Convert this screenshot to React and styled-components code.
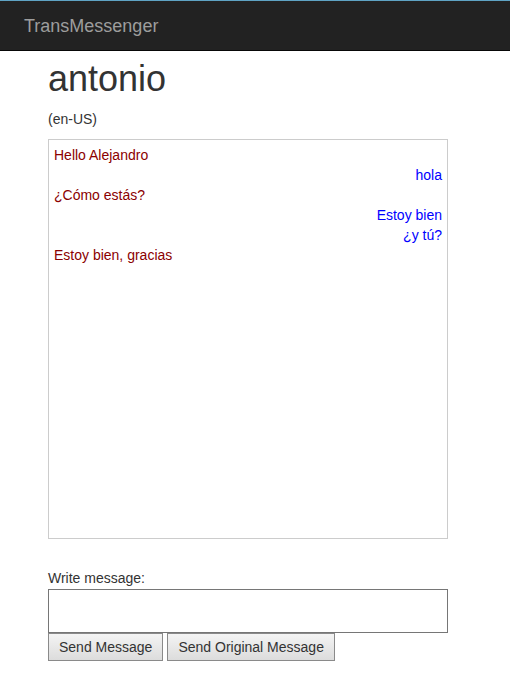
import React, { useState } from 'react';
import styled, { createGlobalStyle } from 'styled-components';

const GlobalStyle = createGlobalStyle`
  html, body {
    margin: 0;
    padding: 0;
    background: #fff;
  }
  body {
    font-family: "Liberation Sans", Arial, sans-serif;
    font-size: 14px;
    line-height: 20px;
    color: #333;
  }
`;

const Navbar = styled.div`
  background: #222;
  border-top: 1px solid #5fa3c4;
  border-bottom: 1px solid #080808;
  box-sizing: border-box;
  height: 51px;
  display: flex;
  align-items: center;
  padding-left: 24px;
`;

const Brand = styled.span`
  font-size: 18px;
  line-height: 20px;
  color: #9d9d9d;
`;

const Container = styled.div`
  padding-left: 48px;
  width: 400px;
`;

const Title = styled.h1`
  font-size: 36px;
  font-weight: 500;
  line-height: 1.1;
  margin: 8px 0 10px;
  color: #333;
`;

const Locale = styled.p`
  margin: 0 0 10px;
`;

const ChatBox = styled.div`
  width: 400px;
  height: 400px;
  box-sizing: border-box;
  border: 1px solid #ccc;
  padding: 5px;
  overflow-y: auto;
`;

const Message = styled.div`
  text-align: ${({ $mine }) => ($mine ? 'right' : 'left')};
  color: ${({ $mine }) => ($mine ? '#0000ff' : '#8b0000')};
`;

const Label = styled.label`
  display: block;
  margin-top: 29px;
  color: #333;
`;

const MessageInput = styled.textarea`
  display: block;
  width: 400px;
  height: 44px;
  box-sizing: border-box;
  margin: 1px 0 0;
  border: 1px solid #767676;
  font-family: inherit;
  font-size: 14px;
  resize: none;
`;

const ButtonRow = styled.div`
  display: flex;
  gap: 4px;
`;

const Button = styled.button`
  height: 28px;
  padding: 0 10px;
  border: 1px solid #8a8a8a;
  border-radius: 0;
  background: linear-gradient(#f4f4f4, #dcdcdc);
  font-family: "Liberation Sans", Arial, sans-serif;
  font-size: 14px;
  color: #333;
  cursor: pointer;
`;

const messages = [
  { text: 'Hello Alejandro', mine: false },
  { text: 'hola', mine: true },
  { text: '¿Cómo estás?', mine: false },
  { text: 'Estoy bien', mine: true },
  { text: '¿y tú?', mine: true },
  { text: 'Estoy bien, gracias', mine: false },
];

const App = () => {
  const [draft, setDraft] = useState('');

  return (
    <>
      <GlobalStyle />
      <Navbar>
        <Brand>TransMessenger</Brand>
      </Navbar>
      <Container>
        <Title>antonio</Title>
        <Locale>(en-US)</Locale>
        <ChatBox>
          {messages.map((m, i) => (
            <Message key={i} $mine={m.mine}>{m.text}</Message>
          ))}
        </ChatBox>
        <Label>Write message:</Label>
        <MessageInput value={draft} onChange={(e) => setDraft(e.target.value)} />
        <ButtonRow>
          <Button>Send Message</Button>
          <Button>Send Original Message</Button>
        </ButtonRow>
      </Container>
    </>
  );
};

export default App;
